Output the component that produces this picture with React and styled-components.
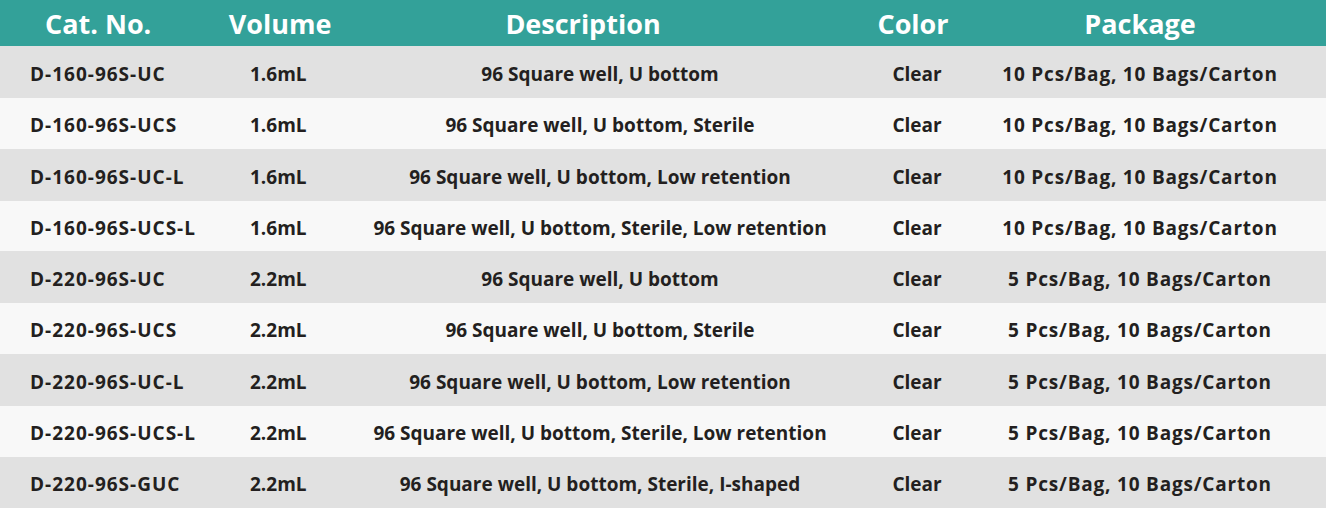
import React from 'react';
import styled, { createGlobalStyle } from 'styled-components';

const GlobalStyle = createGlobalStyle`
  html, body {
    margin: 0;
    padding: 0;
    background: #f8f8f8;
  }
  body {
    font-family: "Open Sans", "Noto Sans", "Liberation Sans", sans-serif;
  }
`;

const cols = '210px 140px 500px 134px 312px 30px';

const Table = styled.div`
  width: 1326px;
  display: flex;
  flex-direction: column;
`;

const HeaderRow = styled.div`
  display: grid;
  grid-template-columns: ${cols};
  height: 46px;
  align-items: center;
  background: #33a199;
  color: #ffffff;
  font-weight: 700;
  font-size: 27px;
`;

const HeadCell = styled.div`
  text-align: ${p => (p.left ? 'left' : 'center')};
  padding-left: ${p => p.indent || 0}px;
  position: relative;
  left: ${p => p.shift || 0}px;
  white-space: nowrap;
`;

const Row = styled.div`
  display: grid;
  grid-template-columns: ${cols};
  height: ${p => p.h}px;
  align-items: center;
  background: ${p => (p.odd ? '#e1e1e1' : '#f8f8f8')};
  color: #231f20;
  font-weight: 700;
  font-size: 19px;
`;

const Cell = styled.div`
  text-align: ${p => (p.left ? 'left' : 'center')};
  padding-left: ${p => p.indent || 0}px;
  padding-top: 3px;
  letter-spacing: ${p => p.spacing || 0}px;
  white-space: nowrap;
`;

const rows = [
  ['D-160-96S-UC', '1.6mL', '96 Square well, U bottom', '10 Pcs/Bag, 10 Bags/Carton'],
  ['D-160-96S-UCS', '1.6mL', '96 Square well, U bottom, Sterile', '10 Pcs/Bag, 10 Bags/Carton'],
  ['D-160-96S-UC-L', '1.6mL', '96 Square well, U bottom, Low retention', '10 Pcs/Bag, 10 Bags/Carton'],
  ['D-160-96S-UCS-L', '1.6mL', '96 Square well, U bottom, Sterile, Low retention', '10 Pcs/Bag, 10 Bags/Carton'],
  ['D-220-96S-UC', '2.2mL', '96 Square well, U bottom', '5 Pcs/Bag, 10 Bags/Carton'],
  ['D-220-96S-UCS', '2.2mL', '96 Square well, U bottom, Sterile', '5 Pcs/Bag, 10 Bags/Carton'],
  ['D-220-96S-UC-L', '2.2mL', '96 Square well, U bottom, Low retention', '5 Pcs/Bag, 10 Bags/Carton'],
  ['D-220-96S-UCS-L', '2.2mL', '96 Square well, U bottom, Sterile, Low retention', '5 Pcs/Bag, 10 Bags/Carton'],
  ['D-220-96S-GUC', '2.2mL', '96 Square well, U bottom, Sterile, I-shaped', '5 Pcs/Bag, 10 Bags/Carton'],
];

const heights = [52, 51, 52, 50, 52, 51, 52, 51, 51];

export default function App() {
  return (
    <>
      <GlobalStyle />
      <Table>
        <HeaderRow>
          <HeadCell left indent={45}>Cat. No.</HeadCell>
          <HeadCell>Volume</HeadCell>
          <HeadCell shift={-17}>Description</HeadCell>
          <HeadCell shift={-4}>Color</HeadCell>
          <HeadCell>Package</HeadCell>
          <div />
        </HeaderRow>
        {rows.map((r, i) => (
          <Row key={r[0]} odd={i % 2 === 0} h={heights[i]}>
            <Cell left indent={30} spacing={1}>{r[0]}</Cell>
            <Cell left indent={40}>{r[1]}</Cell>
            <Cell>{r[2]}</Cell>
            <Cell>Clear</Cell>
            <Cell spacing={0.8}>{r[3]}</Cell>
            <div />
          </Row>
        ))}
      </Table>
    </>
  );
}
